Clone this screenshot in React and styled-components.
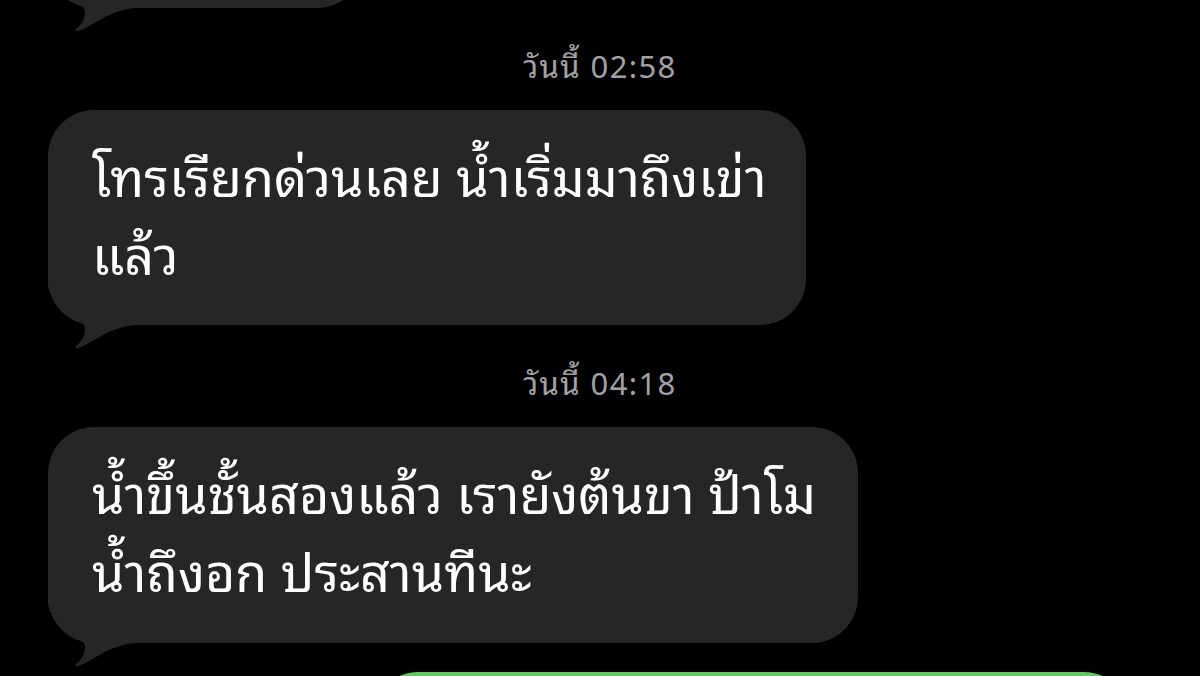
import React from "react";
import styled, { createGlobalStyle } from "styled-components";

const Global = createGlobalStyle`
  html, body {
    margin: 0;
    padding: 0;
    background: #000;
    overflow: hidden;
  }
  #root {
    width: 1200px;
    height: 676px;
    overflow: hidden;
  }
`;

const Thread = styled.div`
  display: flex;
  flex-direction: column;
  width: 1200px;
  height: 676px;
  overflow: hidden;
  background: #000;
  font-family: "Thonburi", "Noto Sans Thai Looped", "Loma", "Garuda", "Tlwg Typo", "Noto Sans Thai", "Noto Sans", sans-serif;
`;

const Timestamp = styled.div`
  align-self: center;
  flex-shrink: 0;
  box-sizing: border-box;
  height: 40px;
  padding-bottom: 8px;
  line-height: 32px;
  margin: 40px 0 22px;
  font-size: 31px;
  letter-spacing: 1.4px;
  color: #a2a2a6;
  white-space: nowrap;
`;

const Bubble = styled.div`
  position: relative;
  box-sizing: border-box;
  width: ${(p) => p.$width}px;
  height: ${(p) => p.$height}px;
  margin-top: ${(p) => p.$offset || 0}px;
  margin-left: ${(p) => (p.$outgoing ? "auto" : "48px")};
  margin-right: ${(p) => (p.$outgoing ? "70px" : "0")};
  flex-shrink: 0;
  padding: 25px 0 0 44px;
  border-radius: 46px;
  background: ${(p) => (p.$outgoing ? "#63c563" : "#262628")};
  color: #fff;
  font-size: 52px;
`;

const Line = styled.span`
  position: relative;
  z-index: 1;
  display: block;
  height: 78px;
  line-height: 78px;
  white-space: nowrap;
`;

const TailSvg = styled.svg`
  position: absolute;
  z-index: 0;
  left: 0;
  bottom: -24px;
  width: 90px;
  height: 84px;
  overflow: visible;
`;

function Tail({ color }) {
  return (
    <TailSvg viewBox="0 0 90 84" aria-hidden="true">
      <path
        d="M0 0 L0 20 C1 38 28 50 36 60 C39 66 35 76 28 81 Q26 83.5 30 83 C46 78 60 62 88 60 L88 0 Z"
        fill={color}
      />
    </TailSvg>
  );
}

function Incoming({ lines, width, height, offset }) {
  return (
    <Bubble $width={width} $height={height} $offset={offset}>
      <Tail color="#262628" />
      {lines.map((l, i) => (
        <Line key={i}>{l}</Line>
      ))}
    </Bubble>
  );
}

export default function App() {
  return (
    <>
      <Global />
      <Thread>
        <Incoming lines={[]} width={315} height={120} offset={-112} />
        <Timestamp>วันนี้ 02:58</Timestamp>
        <Incoming
          width={758}
          height={215}
          lines={["โทรเรียกด่วนเลย น้ำเริ่มมาถึงเข่า", "แล้ว"]}
        />
        <Timestamp>วันนี้ 04:18</Timestamp>
        <Incoming
          width={810}
          height={216}
          lines={["น้ำขึ้นชั้นสองแล้ว เรายังต้นขา ป้าโม", "น้ำถึงอก ประสานทีนะ"]}
        />
        <Bubble $outgoing $width={758} $height={160} $offset={29} />
      </Thread>
    </>
  );
}
